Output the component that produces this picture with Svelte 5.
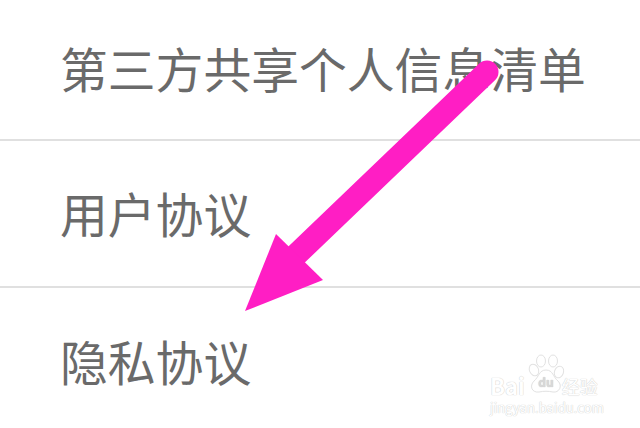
<script>
  const rows = ['第三方共享个人信息清单', '用户协议', '隐私协议'];
</script>

<div class="screen">
  <ul class="list">
    {#each rows as row}
      <li>{row}</li>
    {/each}
  </ul>

  <svg class="arrow" viewBox="0 0 640 428" width="640" height="428" aria-hidden="true">
    <path class="shaft" d="M487 72 L295 256" />
    <path class="head" d="M245 311 L276 234 L323 280 Z" />
  </svg>

  <div class="mark">
    <div class="mark-top">
      <span class="bai">Bai</span>
      <svg class="paw" viewBox="0 0 44 44" width="44" height="44" aria-hidden="true">
        <ellipse cx="12" cy="18" rx="4.5" ry="6" transform="rotate(-25 12 18)" />
        <ellipse cx="19" cy="9" rx="4.5" ry="6" />
        <ellipse cx="31" cy="9" rx="4.5" ry="6" />
        <ellipse cx="37" cy="20" rx="4.5" ry="6" transform="rotate(20 37 20)" />
        <path d="M24 18 C31 18 31 25 36 29 C41 34 37 41 31 40 C26 39 22 39 17 40 C10 41 7 34 12 29 C17 25 17 18 24 18 Z" />
        <text x="24" y="35" text-anchor="middle">du</text>
      </svg>
      <span class="jy">经验</span>
    </div>
    <div class="url">jingyan.baidu.com</div>
  </div>
</div>

<style>
  :global(body) {
    margin: 0;
    background: #fff;
  }

  .screen {
    position: relative;
    width: 640px;
    height: 428px;
    overflow: hidden;
    background: #fff;
    font-family: "Noto Sans CJK SC", "Liberation Sans", sans-serif;
  }

  .list {
    list-style: none;
    margin: 0;
    padding: 0;
  }

  .list li {
    box-sizing: border-box;
    height: 147px;
    padding-left: 60px;
    padding-bottom: 2px;
    display: flex;
    align-items: center;
    font-size: 47.8px;
    color: #6a6a6a;
    border-bottom: 2px solid #e0e0e0;
  }

  .list li:first-child {
    height: 141px;
    padding-bottom: 5px;
  }

  .list li:last-child {
    border-bottom: none;
    height: 140px;
    padding-bottom: 0;
    padding-top: 4px;
  }

  .arrow {
    position: absolute;
    left: 0;
    top: 0;
  }

  .shaft {
    fill: none;
    stroke: #ff1ec4;
    stroke-width: 23;
    stroke-linecap: round;
  }

  .head {
    fill: #ff1ec4;
  }

  .mark {
    position: absolute;
    left: 490px;
    top: 358px;
    width: 120px;
    color: #fff;
    text-shadow: 0 0 1px #d0d0d0, 0 0 1px #d0d0d0;
  }

  .mark-top {
    display: flex;
    align-items: flex-end;
    height: 38px;
  }

  .bai {
    font-size: 22px;
    font-weight: 700;
    line-height: 22px;
  }

  .paw {
    margin: -8px -4px 0 -3px;
    flex: none;
  }

  .paw ellipse,
  .paw path {
    fill: #fff;
    stroke: #e2e2e2;
    stroke-width: 1;
  }

  .paw text {
    fill: #d8d8d8;
    font-size: 12px;
    font-weight: 700;
  }

  .jy {
    font-size: 18px;
    line-height: 20px;
    white-space: nowrap;
  }

  .url {
    margin-top: 5px;
    font-size: 13.2px;
    line-height: 14px;
    white-space: nowrap;
  }
</style>
